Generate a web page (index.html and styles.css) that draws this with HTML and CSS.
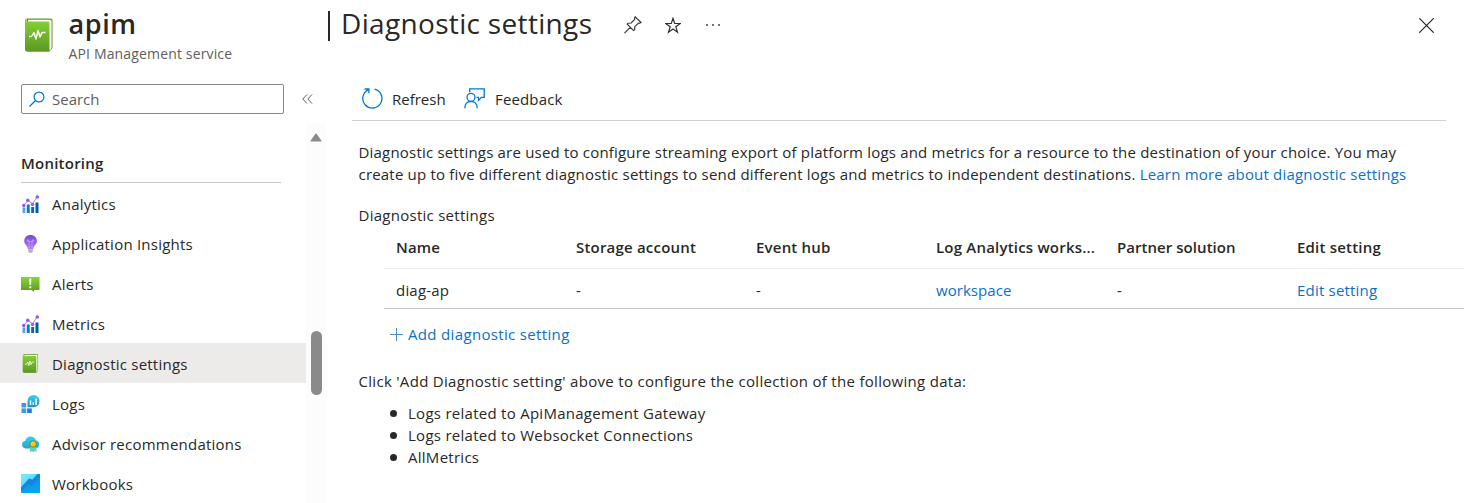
FILE: index.html
```html
<!DOCTYPE html>
<html lang="en">
<head>
<meta charset="utf-8">
<title>apim | Diagnostic settings</title>
<link rel="stylesheet" href="styles.css">
</head>
<body>
<svg class="defs" width="0" height="0" aria-hidden="true">
  <defs>
    <linearGradient id="green" x1="0" y1="0" x2="0" y2="1"><stop offset="0" stop-color="#86d633"/><stop offset="1" stop-color="#5e9624"/></linearGradient>
    <linearGradient id="violet" x1="0" y1="0" x2="0" y2="1"><stop offset="0" stop-color="#6f4bd0"/><stop offset="1" stop-color="#b77af4"/></linearGradient>
    <linearGradient id="teal" x1="0" y1="0" x2="0" y2="1"><stop offset="0" stop-color="#32d4f5"/><stop offset="1" stop-color="#1f8fbd"/></linearGradient>
    <linearGradient id="cloud" x1="0" y1="0" x2="0" y2="1"><stop offset="0" stop-color="#32d4f5"/><stop offset="1" stop-color="#22a5cb"/></linearGradient>
    <linearGradient id="sky" x1="0" y1="0" x2="1" y2="1"><stop offset="0" stop-color="#80f0ff"/><stop offset="1" stop-color="#32c8f5"/></linearGradient>
    <linearGradient id="azure" x1="0" y1="0" x2="0" y2="1"><stop offset="0" stop-color="#1b86e2"/><stop offset="1" stop-color="#00a9ee"/></linearGradient>
    <symbol id="book" viewBox="0 0 28 34">
      <path d="M2 0.5H26Q27.5.5 27.5 2V30L24.500 33.500H2Z" fill="#5e9624"/>
      <path d="M3 1.700H25.500Q26.500 1.700 26.500 3V29.500L25 32.500H3Z" fill="#fff"/>
      <path d="M2 3.500H23Q24.500 3.500 24.500 5V33.500H2Q0 33.500 0 31.500V2Q0 .5 2 .5Q1.500 3.500 2 3.500Z" fill="url(#green)"/>
      <path d="M4 18.500H6.500L9 14.500L11 21L13 12.500L15 19L17 14.500H20.500" fill="none" stroke="#fff" stroke-width="1.400" stroke-linejoin="round"/>
    </symbol>
    <symbol id="chart" viewBox="0 0 18 18">
      <rect x="1" y="12.500" width="2.800" height="5.500" fill="#5ea0ef"/><rect x="5.300" y="9.500" width="2.900" height="8.500" fill="#0078d4"/>
      <rect x="9.700" y="12" width="2.900" height="6" fill="#0f62ad"/><rect x="14" y="7.500" width="3" height="10.500" fill="#005ba1"/>
      <path d="M2.200 10.500L6.300 5.200L11 9L15.700 1.800" fill="none" stroke="#b796f9" stroke-width="1.100"/>
      <g fill="#9557ec"><circle cx="2.200" cy="10.500" r="1.700"/><circle cx="6.300" cy="5.200" r="1.700"/><circle cx="11" cy="9.500" r="1.700"/><circle cx="15.800" cy="2" r="1.800"/></g>
    </symbol>
  </defs>
</svg>

<div class="portal">
  <aside class="sidebar">
    <header class="resource">
      <svg class="resource-icon" width="28" height="34"><use href="#book"/></svg>
      <div>
        <h1 class="resource-name"><span>apim</span></h1>
        <p class="resource-kind"><span>API Management service</span></p>
      </div>
    </header>
    <div class="search-row">
      <div class="search">
        <svg width="16" height="16" viewBox="0 0 16 16" fill="none" stroke="#0078d4" stroke-width="1.200"><circle cx="10" cy="6" r="4.900"/><path d="M6.500 9.500L.5 15.500"/></svg>
        <span class="search-text">Search</span>
      </div>
      <svg class="collapse" width="11" height="10" viewBox="0 0 11 10" fill="none" stroke="#605e5c"><path d="M5 .5L.8 5L5 9.500M10 .5L5.800 5L10 9.500"/></svg>
    </div>
    <div class="menu-area">
      <nav class="menu">
        <h2 class="menu-title"><span>Monitoring</span></h2>
        <ul class="menu-list">
          <li class="item"><svg width="18" height="18"><use href="#chart"/></svg><span>Analytics</span></li>
          <li class="item"><svg width="18" height="18" viewBox="0 0 18 18"><path d="M9 0C5.200 0 2.700 2.700 2.700 6C2.700 9.500 6.200 10.500 6.300 14H11.800C11.900 10.500 15.400 9.500 15.400 6C15.400 2.700 12.800 0 9 0Z" fill="url(#violet)"/><path d="M7.600 13.500V6.500Q5.300 6.500 5.300 5Q7.600 3.800 7.600 6.500H10.500Q10.500 3.800 12.800 5Q12.800 6.500 10.500 6.500V13.500" fill="none" stroke="#d9bbff" stroke-opacity=".7" stroke-width=".8"/><path d="M6.600 14.200H11.500V16L10.500 17.800H7.600L6.600 16Z" fill="#b3b3b3"/></svg><span>Application Insights</span></li>
          <li class="item"><svg width="19" height="18" viewBox="0 0 19 18"><path d="M0 2H18.500V15H13V17L10.500 15H0Z" fill="url(#green)"/><path d="M8.200 3.500H10.400L10 10H8.600ZM8.300 11.200H10.300V13.200H8.300Z" fill="#fff"/></svg><span>Alerts</span></li>
          <li class="item"><svg width="18" height="18"><use href="#chart"/></svg><span>Metrics</span></li>
          <li class="item item-active"><svg width="18" height="19"><use href="#book"/></svg><span>Diagnostic settings</span></li>
          <li class="item"><svg width="18" height="18" viewBox="0 0 18 18"><g fill="#3e96e8"><rect y="8" width="4.700" height="4.500"/><rect y="13.400" width="4.700" height="4.600"/><rect x="5.600" y="13.400" width="4.700" height="4.600" fill="#1f7fd8"/></g><path d="M12 0A6 6 0 0 1 18 6.200A6 6 0 0 1 12 12.300H6V6.200A6 6 0 0 1 12 0Z" fill="url(#teal)"/><path d="M9 5.500V10M11.800 7.200V10M14.600 3.500V10" stroke="#fff" stroke-width="1.500"/></svg><span>Logs</span></li>
          <li class="item"><svg width="18" height="18" viewBox="0 0 18 18"><path d="M4 13.500A3.900 3.900 0 0 1 3.800 5.800A5.500 5.500 0 0 1 14.300 5.200A4.200 4.200 0 0 1 14 13.500Z" fill="url(#cloud)"/><path d="M8.800 11L8.300 17.500L10.500 16L11.600 17.500L13 16L15.200 17L14.500 11Z" fill="#57d4bf"/><circle cx="11.600" cy="8.900" r="3.500" fill="#6d7b54"/><circle cx="11.600" cy="8.900" r="2.700" fill="#ffca00"/></svg><span>Advisor recommendations</span></li>
          <li class="item"><svg width="19" height="19" viewBox="0 0 19 19"><rect width="19" height="19" rx=".8" fill="url(#azure)"/><path d="M.8 0H18L12 6.500L9.500 4.500L0 13.500V.8Z" fill="url(#sky)"/><path d="M0 13.500L8 4.500L10.500 6.500L16.500 0H19V3L10.500 11.500L8 10L0 17.500Z" fill="#1683df"/></svg><span>Workbooks</span></li>
        </ul>
      </nav>
      <div class="scrollbar">
        <svg width="12" height="9" viewBox="0 0 12 9"><path d="M1 8.500H11Q12 8.500 11.300 7.500L6.700 1Q6 .2 5.300 1L.7 7.500Q0 8.500 1 8.500Z" fill="#8a8a8a"/></svg>
        <div class="thumb"></div>
      </div>
    </div>
  </aside>

  <main class="blade">
    <header class="blade-head">
      <h2 class="blade-title"><span class="bar"></span><span class="title-text">Diagnostic settings</span></h2>
      <svg class="pin" width="18" height="18" viewBox="0 0 18 18" fill="none" stroke="#323130" stroke-width="1.150"><path d="M11.300 .8L17 6.500L15.800 7.200L14.500 7L10.800 10.700L10.600 13.800L9.600 14.600L3.200 8.200L4 7.200L7.200 7L10.800 3.300L10.500 1.800ZM6.200 11.400L.5 17.200"/></svg>
      <svg class="star" width="16" height="17" viewBox="0 0 16 17" fill="none" stroke="#323130" stroke-width="1.200"><path d="M8 1.300L9.700 6.500H15.200L10.800 9.800L12.500 15.300L8 12L3.500 15.300L5.200 9.800L.8 6.500H6.300Z"/></svg>
      <svg class="more" width="14" height="2" viewBox="0 0 14 2" fill="#323130"><circle cx="1" cy="1" r=".9"/><circle cx="7" cy="1" r=".9"/><circle cx="13" cy="1" r=".9"/></svg>
      <svg class="close" width="15" height="15" viewBox="0 0 15 15" stroke="#252423" stroke-width="1.150"><path d="M.3 .3L14.700 14.700M14.700 .3L.3 14.700"/></svg>
    </header>

    <div class="toolbar">
      <svg width="21" height="21" viewBox="0 0 21 21" fill="none" stroke="#0078d4" stroke-width="1.300"><path d="M12.500 1.100A9.600 9.600 0 1 1 6.200 1.800M2.600 1H6.900V5.300"/></svg>
      <span class="tool-refresh">Refresh</span>
      <svg width="21" height="21" viewBox="0 0 21 21" fill="none" stroke="#0078d4" stroke-width="1.300"><path d="M5.700 4.200V.8H20.200V9.300H17.500L14.500 12.400V9.300H12.500"/><circle cx="7" cy="9.300" r="4"/><path d="M.8 20.300Q1 13.500 7 13.400Q13 13.500 13.300 20.300"/></svg>
      <span class="tool-feedback">Feedback</span>
    </div>

    <section class="content">
      <p class="intro"><span class="line1">Diagnostic settings are used to configure streaming export of platform logs and metrics for a resource to the destination of your choice. You may</span><br><span class="line2">create up to five different diagnostic settings to send different logs and metrics to independent destinations. <a class="link">Learn more about diagnostic settings</a></span></p>
      <p class="label">Diagnostic settings</p>
      <div class="table">
        <div class="row row-head"><span>Name</span><span>Storage account</span><span>Event hub</span><span class="clip">Log Analytics works...</span><span class="partner">Partner solution</span><span>Edit setting</span></div>
        <div class="row row-data"><span><span class="cut">diag-ap</span></span><span>-</span><span>-</span><a class="link workspace">workspace</a><span>-</span><a class="link">Edit setting</a></div>
      </div>
      <a class="add link"><svg width="13" height="13" viewBox="0 0 13 13" stroke="#4a8bd6"><path d="M6.500 0V13M0 6.500H13"/></svg><span>Add diagnostic setting</span></a>
      <p class="hint">Click 'Add Diagnostic setting' above to configure the collection of the following data:</p>
      <ul class="data">
        <li><span>Logs related to ApiManagement Gateway</span></li>
        <li><span>Logs related to Websocket Connections</span></li>
        <li><span>AllMetrics</span></li>
      </ul>
    </section>
  </main>
</div>
</body>
</html>
```
FILE: styles.css
```css
* { box-sizing: border-box; margin: 0; padding: 0; }
body {
  width: 1466px; height: 503px; overflow: hidden; background: #fff; color: #292827;
  font: 15px/22px "Open Sans", "Noto Sans", sans-serif; white-space: nowrap;
}
.defs { position: absolute; }
svg { display: block; flex: none; }
ul { list-style: none; }
.portal { display: flex; height: 503px; }

.sidebar { width: 326px; display: flex; flex-direction: column; flex: none; }
.resource { display: flex; gap: 15.500px; height: 84px; flex: none; padding: 6px 0 0 25px; }
.resource-icon { margin-top: 12px; }
.resource-name { font-size: 27px; line-height: 36px; font-weight: 600; letter-spacing: .6px; }
.resource-kind { font-size: 14px; line-height: 24px; color: #605e5c; letter-spacing: .15px; }
.search-row { display: flex; align-items: center; gap: 18px; height: 30px; flex: none; padding-left: 21px; }
.search { display: flex; align-items: center; gap: 7px; width: 263px; height: 30px; padding-left: 7px; border: 1px solid #8a8886; border-radius: 2px; color: #605e5c; }
.menu-area { display: flex; flex: 1; min-height: 0; margin-top: 9px; }
.menu { width: 306px; overflow: hidden; letter-spacing: .23px; }
.menu-title { margin: 29px 25px 0 21px; height: 31px; border-bottom: 1px solid #c8c6c4; font-size: 15px; line-height: 22px; font-weight: 600; }
.item { display: flex; align-items: center; height: 40px; padding: 1px 0 0 21px; }
.item svg { width: 19px; margin: 0 12px 0 0; }
.item-active { background: #edebe9; }
.scrollbar { width: 20px; background: #fcfcfc; padding: 10px 0 0 4px; }
.thumb { width: 11px; height: 64px; margin: 189px 0 0 1px; border-radius: 6px; background: #8a8a8a; }

.blade { flex: 1; min-width: 0; }
.blade-head { display: flex; height: 77px; padding-left: 2px; }
.blade-title { display: flex; width: 296px; font-size: 28px; line-height: 36px; font-weight: 400; padding-top: 5px; letter-spacing: .33px; }
.bar { width: 2px; height: 30px; margin: 6px 11px 0 0; background: #292827; }
.pin { margin-top: 16px; }
.star { margin: 17px 0 0 22.500px; }
.more { margin: 24px 0 0 25px; }
.close { margin: 18px 32px 0 auto; }
.toolbar { display: flex; align-items: center; height: 44px; margin: 0 20px 0 26px; padding-left: 9.500px; border-bottom: 1px solid #d2d0ce; }
.tool-refresh { width: 72px; margin-left: 9.500px; }
.tool-feedback { margin-left: 10px; letter-spacing: .15px; }
.content { padding: 20px 0 0 32.500px; letter-spacing: .27px; }
.intro { letter-spacing: .195px; }
.label { margin-top: 19px; }
.link { color: #0b70c9; }
.table { margin: 0 2px 0 25.500px; }
.row { display: grid; grid-template-columns: 180px 180px 180px 181px 180px 1fr; height: 40px; padding-left: 12px; align-items: center; border-bottom: 1px solid #c8c6c4; letter-spacing: .2px; }
.row-head { height: 43px; padding-bottom: 1px; font-weight: 600; border-color: #edebe9; }
.row-data { padding-top: 3px; }
.workspace { letter-spacing: .05px; }
.partner { letter-spacing: .05px; }
.cut { display: inline-block; width: 53px; overflow: hidden; vertical-align: top; }
.add { display: flex; align-items: center; gap: 5px; margin: 14px 0 0 31.500px; letter-spacing: .34px; }
.hint { margin-top: 25px; letter-spacing: .3px; }
.data { margin: 10px 0 0 31.500px; }
.data li { display: flex; align-items: center; gap: 11px; }
.data li::before { content: ""; width: 7px; height: 7px; background: #292827; border-radius: 50%; }
```
